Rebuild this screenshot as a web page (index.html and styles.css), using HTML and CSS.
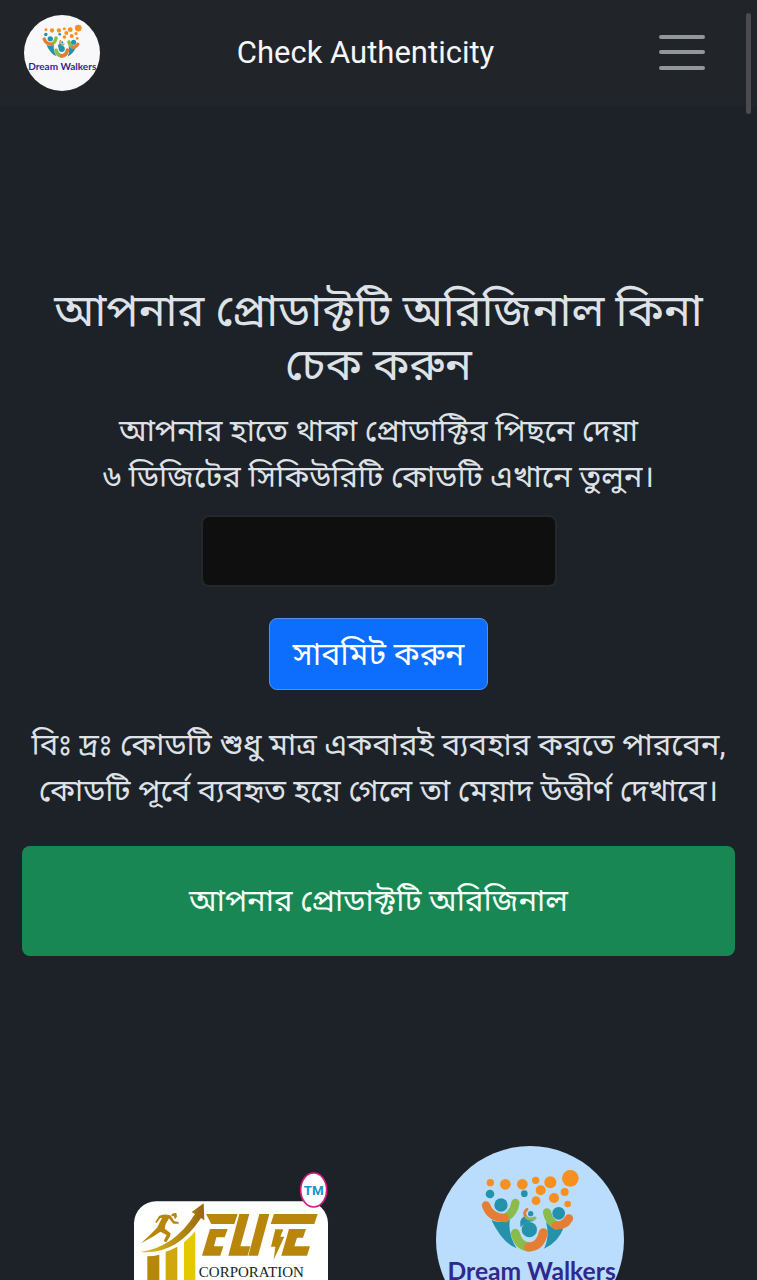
FILE: index.html
```html
<!DOCTYPE html>
<html lang="bn">
<head>
<meta charset="utf-8">
<meta name="viewport" content="width=device-width, initial-scale=1">
<title>Check Authenticity</title>
<link rel="stylesheet" href="styles.css">
</head>
<body>
<svg class="defs" aria-hidden="true">
  <defs>
  <g id="walkers-art">
    <g fill="#f7901e">
      <circle cx="211" cy="158" r="11"/><circle cx="256" cy="163" r="16"/><circle cx="307" cy="163" r="16"/>
      <circle cx="347" cy="151" r="11"/><circle cx="391" cy="157" r="18"/><circle cx="451" cy="145" r="25"/>
      <circle cx="362" cy="181" r="15"/><circle cx="434" cy="186" r="12"/><circle cx="402" cy="204" r="15"/>
      <circle cx="348" cy="212" r="13"/><circle cx="443" cy="222" r="10"/>
    </g>
    <path fill="#2592ac" d="M214 270Q240 282 270 266Q262 310 290 355Q248 340 214 270ZM378 276Q402 302 432 290Q416 336 372 356Q390 320 378 276ZM302 292Q296 262 318 258Q326 272 346 272Q316 274 302 292Z"/>
    <g fill="none" stroke-linecap="round" stroke-width="25">
      <path stroke="#8bbb4b" d="M286 219Q282 248 256 264"/>
      <path stroke="#e67d35" d="M198 226Q210 264 254 264"/>
      <path stroke="#8bbb4b" d="M381 247Q386 274 408 286"/>
      <path stroke="#e67d35" d="M447 265Q434 288 408 286"/>
      <path stroke="#8bbb4b" stroke-width="27" d="M286 310Q296 350 330 351"/>
      <path stroke="#e67d35" stroke-width="27" d="M370 308Q362 350 326 351"/>
      <path stroke="#e67d35" stroke-width="9" d="M321 238Q308 248 318 260"/>
      <path stroke="#8bbb4b" stroke-width="9" d="M320 263Q330 270 345 264"/>
    </g>
    <g fill="#2592ac">
      <circle cx="210" cy="192" r="13"/><circle cx="313" cy="191" r="10"/><circle cx="243" cy="225" r="20"/>
      <circle cx="416" cy="250" r="19"/><circle cx="328" cy="299" r="23"/><circle cx="332" cy="251" r="8"/>
    </g>
  </g>
  </defs>
</svg>
<div class="page">
  <header class="navbar">
    <a class="brand" href="#" aria-label="Dream Walkers"><svg class="brand-art" viewBox="48 48 564 564"><use href="#walkers-art"/><text class="walkers-name" x="332" y="455" text-anchor="middle">Dream Walkers</text></svg></a>
    <a class="nav-title" href="#">Check Authenticity</a>
    <button class="toggler" type="button" aria-label="Menu">
      <svg class="toggler-icon" viewBox="0 0 48 36"><path d="M3 2H45M3 17H45M3 33H45"/></svg>
    </button>
  </header>
  <main class="content">
    <h1 class="heading"><label for="code">আপনার প্রোডাক্টটি অরিজিনাল কিনা চেক করুন</label></h1>
    <p class="text">আপনার হাতে থাকা প্রোডাক্টির পিছনে দেয়া<br>৬ ডিজিটের সিকিউরিটি কোডটি এখানে তুলুন।</p>
    <form class="check-form">
      <input class="code" id="code" type="text">
      <button class="submit" type="submit">সাবমিট করুন</button>
    </form>
    <p class="text">বিঃ দ্রঃ কোডটি শুধু মাত্র একবারই ব্যবহার করতে পারবেন,<br>কোডটি পূর্বে ব্যবহৃত হয়ে গেলে তা মেয়াদ উত্তীর্ণ দেখাবে।</p>
    <div class="result" role="status">আপনার প্রোডাক্টটি অরিজিনাল</div>
  </main>
  <footer class="partners">
    <svg class="elite" viewBox="36 36 588 480" role="img" aria-label="Elite Corporation">
      <defs>
        <linearGradient id="gold" x1="0" y1="0" x2="1" y2="0"><stop offset="0" stop-color="#e0c51a"/><stop offset="1" stop-color="#9a6510"/></linearGradient>
      </defs>
      <rect x="39" y="124" width="582" height="450" rx="66" fill="#fff"/>
      <path fill="#b8860b" d="M79 289Q98 289 115 284V560H79Z"/>
      <path fill="#d0a70c" d="M134 275Q152 269 169 260V560H134Z"/>
      <path fill="#e5c900" d="M189 247Q208 232 223 214V560H189Z"/>
      <path fill="url(#gold)" d="M58 276Q160 262 222 162L212 156L248 130L250 181L240 174Q166 286 58 276Z"/>
      <g fill="#b8860b">
        <path d="M125 170L146 172L134 192L131 206L149 220L147 229L136 247L128 243L137 225L118 215L98 229L60 250L90 222L108 203Z"/>
        <path d="M106 190L103 186L114 168Q126 160 148 166L160 184L173 186V191L157 191L143 174L118 174Z"/>
        <path d="M151 169Q150 158 166 159L168 170L162 178L158 168Z"/>
      </g>
      <g fill="#b8860b">
        <path d="M255 162H350L340 192H271ZM267 207H320L311 232H286L279 259H307L298 287H243Z"/>
        <path d="M355 162H385L358 259H388L380 287H322Z"/>
        <path d="M415 162H445L411 287H382Z"/>
        <path d="M459 162H590L580 192H449Z"/>
        <path d="M504 207H555L546 233H528L520 259H567L558 287H481Z"/>
        <path d="M463 208H487L478 230H490L458 299L463 260H450Z"/>
      </g>
      <text class="elite-name" x="391" y="352" text-anchor="middle">CORPORATION</text>
      <ellipse cx="578" cy="90" rx="39" ry="51" fill="#fff" stroke="#d91b86" stroke-width="5"/>
      <text class="elite-mark" x="578" y="105" text-anchor="middle">TM</text>
    </svg>
    <svg class="walkers" viewBox="48 48 564 564" role="img" aria-label="Dream Walkers"><use href="#walkers-art"/><text class="walkers-name" x="335" y="449" text-anchor="middle">Dream Walkers</text></svg>
  </footer>
  <div class="scroll-thumb"></div>
</div>
</body>
</html>
```
FILE: styles.css
```css
* { box-sizing: border-box; }
body {
  margin: 0;
  background: #1d2128;
  color: #dee2e6;
  font-family: Roboto, "Noto Sans Bengali", "Noto Sans", sans-serif;
}
.defs { position: absolute; width: 0; height: 0; }
.page {
  position: relative;
  display: flex;
  flex-direction: column;
  height: 100vh;
  overflow: hidden;
}
.navbar {
  display: flex;
  flex: none;
  align-items: center;
  justify-content: space-between;
  padding: 15px 24px;
  background: #212529;
}
.brand {
  width: 76px;
  height: 76px;
  border-radius: 50%;
  background: #f8f8fa;
  overflow: hidden;
}
.brand-art { display: block; width: 100%; height: 100%; }
.nav-title { color: #f5f6f7; font-size: 31px; line-height: 40px; text-decoration: none; }
.toggler { display: flex; padding: 0 27px; border: 0; background: none; }
.toggler-icon { width: 48px; height: 36px; fill: none; stroke: #929799; stroke-width: 4; stroke-linecap: round; }
.content {
  display: flex;
  flex: none;
  flex-direction: column;
  padding: 178px 22px 0;
  text-align: center;
}
.heading { margin: 0 0 16px; font-size: 45px; line-height: 54px; font-weight: 400; }
.text { margin: 0; font-size: 31px; line-height: 46px; }
.check-form {
  display: flex;
  flex-direction: column;
  align-items: center;
  gap: 31px;
  padding: 15px 0 32px;
}
.code {
  width: 356px;
  max-width: 100%;
  height: 72px;
  padding: 12px 24px;
  border: 2px solid #25282b;
  border-radius: 8px;
  background: #0f0f10;
  color: #dee2e6;
  font: inherit;
  font-size: 32px;
}
.submit {
  padding: 12px 23px;
  border: 1px solid #5590ee;
  border-radius: 8px;
  background: #0d6efd;
  color: #fff;
  font: inherit;
  font-size: 32px;
  line-height: 46px;
}
.result {
  margin-top: 32px;
  padding: 32px 24px;
  border-radius: 8px;
  background: #198754;
  color: #f4fff8;
  font-size: 31px;
  line-height: 46px;
}
.partners {
  display: flex;
  flex: none;
  align-items: flex-start;
  justify-content: space-around;
  padding: 190px 79px 0;
}
.elite { width: 196px; height: 160px; margin-top: 26px; }
.walkers { width: 188px; height: 188px; border-radius: 50%; background: #badcfd; }
.walkers-name { fill: #30288c; font-family: Lato, sans-serif; font-size: 74px; font-weight: 700; }
.elite-name { fill: #222; font-family: "Liberation Serif", serif; font-size: 45px; }
.elite-mark { fill: #1695cf; font-family: Roboto, sans-serif; font-size: 40px; font-weight: 700; }
.scroll-thumb {
  position: absolute;
  top: 13px;
  right: 6px;
  width: 5px;
  height: 101px;
  border-radius: 3px;
  background: #4b4a4f;
}
```
